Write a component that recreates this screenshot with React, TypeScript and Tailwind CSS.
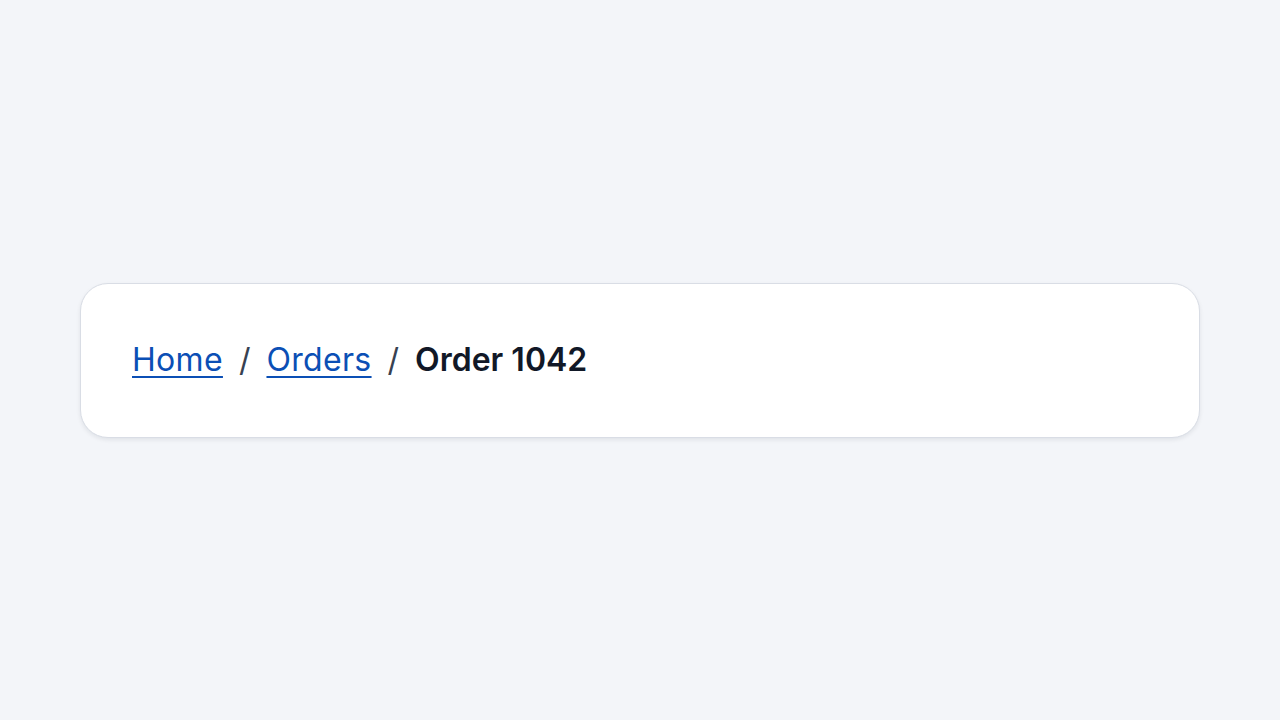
export default function App() {
  return (
    <div className="min-h-screen bg-[#f3f5f9] flex items-center px-20 font-['Inter',sans-serif]">
      <nav
        aria-label="Breadcrumb"
        className="w-full h-[155px] bg-white border border-[#d9dde5] rounded-[28px] shadow-[0_2px_4px_rgba(15,23,42,0.08)] flex items-center pl-[51px] pr-[50px]"
      >
        <ol className="flex items-center gap-4 text-[32px] leading-none">
          <li>
            <a href="#" className="text-[#0b4fb5] underline decoration-2 underline-offset-[5px] tracking-[0.01em]">
              Home
            </a>
          </li>
          <li className="text-[#374151]">/</li>
          <li>
            <a href="#" className="text-[#0b4fb5] underline decoration-2 underline-offset-[5px] tracking-[0.01em]">
              Orders
            </a>
          </li>
          <li className="text-[#374151]">/</li>
          <li aria-current="page" className="font-semibold text-[#111827]">
            Order 1042
          </li>
        </ol>
      </nav>
    </div>
  );
}
